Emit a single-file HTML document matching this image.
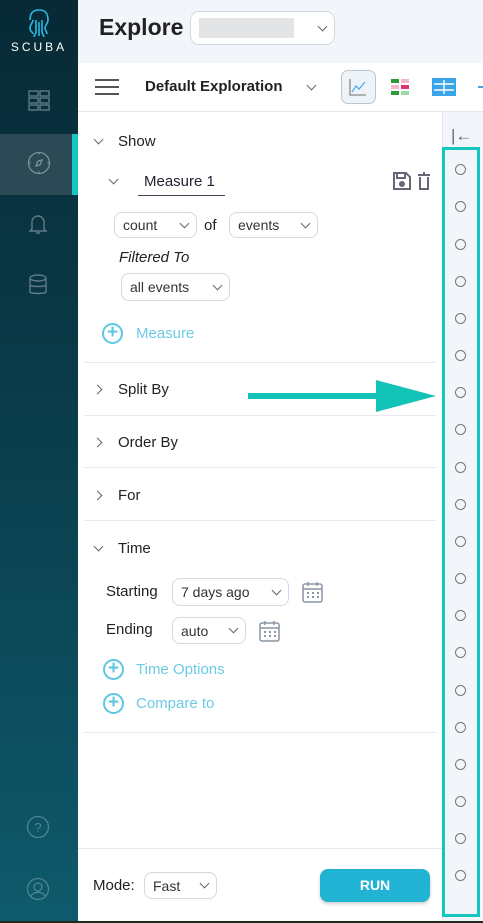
<!DOCTYPE html><html><head><style>
*{box-sizing:border-box;margin:0;padding:0}
body{width:483px;height:923px;overflow:hidden;font-family:"Liberation Sans",sans-serif;background:#fff;position:relative;color:#222}
.a{position:absolute}
.sb{left:0;top:0;width:78px;height:923px;background:linear-gradient(#072a35 0%,#0a3a48 40%,#0e5a6c 100%)}
.sel{border:1px solid #d3d9e0;border-radius:8px;background:#fff;font-size:14px;color:#333;padding:0 8px;display:flex;align-items:center;justify-content:space-between}
.chev{width:7px;height:7px;border-right:1.3px solid #666;border-bottom:1.3px solid #666;transform:rotate(45deg);margin-top:-4px}
.chevr{width:7px;height:7px;border-right:1.3px solid #666;border-bottom:1.3px solid #666;transform:rotate(-45deg)}
.hr{height:1px;background:#e6e9ee;left:84px;width:352px}
.lbl{font-size:15px;color:#222}
.plus{width:21px;height:21px;border:2px solid #5bc8e2;border-radius:50%;color:#5bc8e2;font-size:19px;line-height:16px;text-align:center;font-weight:bold}
.blue{color:#6ccbe6;font-size:15px}
.c{width:11px;height:11px;border:1px solid #777;border-radius:50%;left:455px}
</style></head><body>
<div class="a sb"></div>
<svg class="a" style="left:26px;top:8px" width="26" height="30" viewBox="0 0 26 30" fill="none" stroke="#2ab8e0" stroke-width="1.6"><path d="M4 12C4 4 8 2 13 2s9 2 9 10c0 4-3 5-3 8s2 3 2 6M7 12c0 3-3 4-3 8s3 4 3 6M10 12v12c0 2-2 3-2 5M16 12v12c0 2 2 3 2 5M13 14v14"/></svg>
<div class="a" style="left:10px;top:40px;width:58px;text-align:center;color:#fff;font-size:12px;letter-spacing:3px">SCUBA</div>
<svg class="a" style="left:28px;top:90px" width="22" height="21" fill="none" stroke="#5f7c87" stroke-width="1.4"><rect x="1" y="1" width="9" height="5"/><rect x="12" y="1" width="9" height="5"/><rect x="1" y="8" width="9" height="5"/><rect x="12" y="8" width="9" height="5"/><rect x="1" y="15" width="9" height="5"/><rect x="12" y="15" width="9" height="5"/></svg>
<div class="a" style="left:0;top:134px;width:78px;height:61px;background:#2c4a56"></div>
<div class="a" style="left:72px;top:134px;width:6px;height:61px;background:#14c8c0"></div>
<svg class="a" style="left:27px;top:151px" width="24" height="24" fill="none" stroke="#7a939b" stroke-width="1.3"><circle cx="12" cy="12" r="10.5"/><path d="M15 9l-2 5-4 1 2-5z"/><path d="M12 1.5v2M12 20.5v2M1.5 12h2M20.5 12h2"/></svg>
<svg class="a" style="left:28px;top:213px" width="20" height="22" fill="none" stroke="#5f7c87" stroke-width="1.4"><path d="M4 16V9a6 6 0 0112 0v7l2 2H2z M8 20h4"/></svg>
<svg class="a" style="left:28px;top:274px" width="20" height="22" fill="none" stroke="#5f7c87" stroke-width="1.4"><ellipse cx="10" cy="4" rx="8" ry="3"/><path d="M2 4v14c0 2 16 2 16 0V4M2 11c0 2 16 2 16 0"/></svg>
<svg class="a" style="left:26px;top:815px" width="24" height="24" fill="none" stroke="#4f8593" stroke-width="1.3"><circle cx="12" cy="12" r="10.5"/><text x="12" y="17" font-size="13" fill="#4f8593" stroke="none" text-anchor="middle" font-family="Liberation Sans">?</text></svg>
<svg class="a" style="left:26px;top:877px" width="24" height="24" fill="none" stroke="#4f8593" stroke-width="1.3"><circle cx="12" cy="12" r="10.5"/><circle cx="12" cy="10" r="4"/><path d="M5 19c3-5 11-5 14 0"/></svg>

<div class="a" style="left:78px;top:0;width:405px;height:63px;background:#f2f5f9"></div>
<div class="a" style="left:99px;top:14px;font-size:23px;font-weight:bold;color:#222">Explore</div>
<div class="a sel" style="left:190px;top:11px;width:145px;height:34px;border-radius:9px"><div style="width:95px;height:20px;background:#e3e4e6"></div><div class="chev"></div></div>
<div class="a" style="left:78px;top:63px;width:405px;height:49px;background:#fff;border-bottom:1px solid #e3e7ec"></div>
<div class="a" style="left:95px;top:79px;width:24px;height:16px;border-top:2px solid #555;border-bottom:2px solid #555"><div style="margin-top:5px;height:2px;background:#555"></div></div>
<div class="a" style="left:145px;top:78px;font-size:15px;font-weight:bold">Default Exploration</div>
<div class="a chev" style="left:308px;top:86px"></div>
<div class="a" style="left:341px;top:70px;width:35px;height:34px;border:1px solid #b9c7d4;border-radius:7px;background:#eef3f8"></div>
<svg class="a" style="left:348px;top:77px" width="20" height="20" fill="none" stroke-width="1.3"><path d="M2 2v16h16" stroke="#888"/><path d="M4 15l4-6 3 3 6-7" stroke="#4ab0f0"/></svg>
<svg class="a" style="left:391px;top:79px" width="19" height="16"><rect x="0" y="0" width="8" height="4" fill="#2a9a3a"/><rect x="10" y="0" width="8" height="4" fill="#f3b8c8"/><rect x="0" y="6" width="8" height="4" fill="#f3b8c8"/><rect x="10" y="6" width="8" height="4" fill="#e0356a"/><rect x="0" y="12" width="8" height="4" fill="#2a9a3a"/><rect x="10" y="12" width="8" height="4" fill="#9ed8a6"/></svg>
<svg class="a" style="left:432px;top:78px" width="24" height="18"><rect width="24" height="18" fill="#3aa4ea"/><path d="M2 6h20M2 12h20M12 2v14" stroke="#fff" stroke-width="1.4"/></svg>
<div class="a" style="left:478px;top:86px;width:5px;height:2px;background:#3aa4ea"></div>

<div class="a" style="left:442px;top:112px;width:41px;height:811px;background:#f2f5f9;border-left:1px solid #e1e6ec"></div>
<div class="a" style="left:451px;top:126px;font-size:17px;color:#667">|←</div>
<div class="a" style="left:442px;top:147px;width:38px;height:770px;border:3px solid #14c8c0"></div>
<div class="a c" style="top:164px"></div><div class="a c" style="top:201px"></div><div class="a c" style="top:239px"></div><div class="a c" style="top:276px"></div><div class="a c" style="top:313px"></div><div class="a c" style="top:350px"></div><div class="a c" style="top:387px"></div><div class="a c" style="top:424px"></div><div class="a c" style="top:462px"></div><div class="a c" style="top:499px"></div><div class="a c" style="top:536px"></div><div class="a c" style="top:573px"></div><div class="a c" style="top:610px"></div><div class="a c" style="top:647px"></div><div class="a c" style="top:685px"></div><div class="a c" style="top:722px"></div><div class="a c" style="top:759px"></div><div class="a c" style="top:796px"></div><div class="a c" style="top:833px"></div><div class="a c" style="top:870px"></div>

<div class="a chev" style="left:95px;top:140px"></div><div class="a lbl" style="left:118px;top:133px">Show</div>
<div class="a chev" style="left:110px;top:180px"></div>
<div class="a lbl" style="left:144px;top:173px;color:#223">Measure 1</div>
<div class="a" style="left:138px;top:195px;width:87px;height:1px;background:#445"></div>
<svg class="a" style="left:392px;top:171px" width="40" height="20" fill="none" stroke="#667" stroke-width="2"><path d="M2 2h12l4 4v12H2z"/><path d="M5 2v5h8V2"/><circle cx="10" cy="13" r="2" fill="#667"/><path d="M26 4h12M31 2h2M28 6v12h8V6"/></svg>
<div class="a sel" style="left:114px;top:212px;width:83px;height:26px">count<div class="chev"></div></div>
<div class="a lbl" style="left:204px;top:217px">of</div>
<div class="a sel" style="left:229px;top:212px;width:89px;height:26px">events<div class="chev"></div></div>
<div class="a lbl" style="left:119px;top:249px;font-style:italic">Filtered To</div>
<div class="a sel" style="left:121px;top:273px;width:109px;height:28px">all events<div class="chev"></div></div>
<div class="a plus" style="left:102px;top:323px">+</div><div class="a blue" style="left:136px;top:325px">Measure</div>
<div class="a hr" style="top:362px"></div>
<div class="a chevr" style="left:94px;top:386px"></div><div class="a lbl" style="left:118px;top:381px">Split By</div>
<svg class="a" style="left:248px;top:375px" width="190" height="42"><path d="M0 18h128v-13l60 16-60 16v-13H0z" fill="#14c3b7"/></svg>
<div class="a hr" style="top:415px"></div>
<div class="a chevr" style="left:94px;top:439px"></div><div class="a lbl" style="left:118px;top:434px">Order By</div>
<div class="a hr" style="top:467px"></div>
<div class="a chevr" style="left:94px;top:492px"></div><div class="a lbl" style="left:118px;top:487px">For</div>
<div class="a hr" style="top:520px"></div>
<div class="a chev" style="left:95px;top:547px"></div><div class="a lbl" style="left:118px;top:540px">Time</div>
<div class="a lbl" style="left:106px;top:583px">Starting</div>
<div class="a sel" style="left:172px;top:578px;width:117px;height:28px">7 days ago<div class="chev"></div></div>
<svg class="a" style="left:302px;top:581px" width="21" height="22" fill="none" stroke="#8a96a3" stroke-width="1.5"><rect x="1" y="3" width="19" height="18" rx="2"/><path d="M1 8h19M6 1v4M15 1v4"/><path d="M5 12h2M10 12h2M15 12h2M5 16h2M10 16h2M15 16h2" stroke-width="2"/></svg>
<div class="a lbl" style="left:106px;top:621px">Ending</div>
<div class="a sel" style="left:172px;top:617px;width:74px;height:27px">auto<div class="chev"></div></div>
<svg class="a" style="left:259px;top:620px" width="21" height="22" fill="none" stroke="#8a96a3" stroke-width="1.5"><rect x="1" y="3" width="19" height="18" rx="2"/><path d="M1 8h19M6 1v4M15 1v4"/><path d="M5 12h2M10 12h2M15 12h2M5 16h2M10 16h2M15 16h2" stroke-width="2"/></svg>
<div class="a plus" style="left:103px;top:659px">+</div><div class="a blue" style="left:136px;top:661px">Time Options</div>
<div class="a plus" style="left:103px;top:693px">+</div><div class="a blue" style="left:136px;top:695px">Compare to</div>
<div class="a hr" style="top:732px"></div>
<div class="a" style="left:78px;top:848px;width:364px;height:1px;background:#e3e9ef"></div>
<div class="a lbl" style="left:93px;top:877px">Mode:</div>
<div class="a sel" style="left:144px;top:872px;width:73px;height:27px">Fast<div class="chev"></div></div>
<div class="a" style="left:320px;top:869px;width:110px;height:33px;border-radius:8px;background:#20b3d4;color:#fff;font-weight:bold;font-size:14px;text-align:center;line-height:33px;box-shadow:0 2px 3px rgba(0,0,0,.2)">RUN</div>
<div class="a" style="left:0;top:921px;width:483px;height:2px;background:#1f2a1a"></div>
</body></html>
